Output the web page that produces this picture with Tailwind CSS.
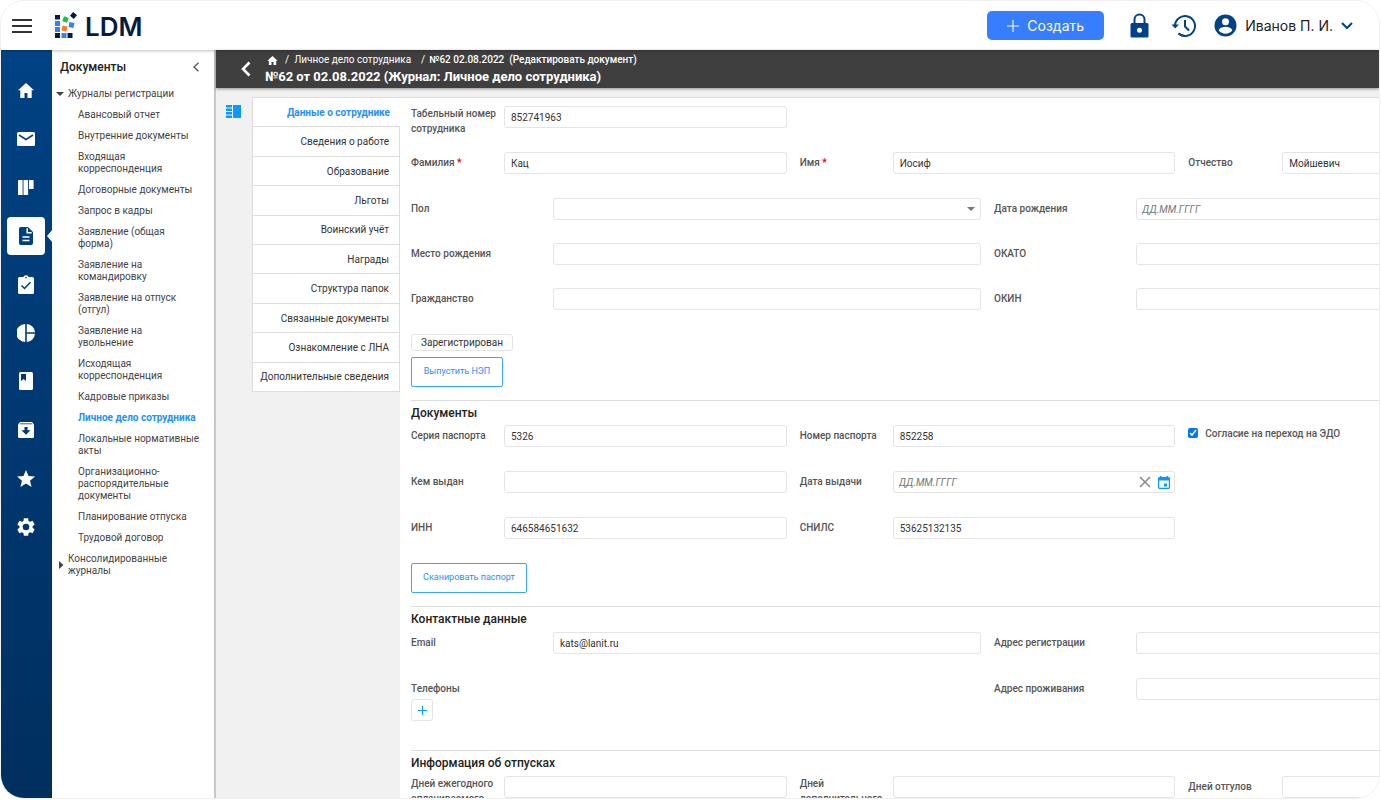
<!DOCTYPE html>
<html lang="ru">
<head>
<meta charset="utf-8">
<meta name="viewport" content="width=device-width, initial-scale=1">
<title>LDM</title>
<script src="https://cdn.jsdelivr.net/npm/@tailwindcss/browser@4"></script>
</head>
<body class="h-screen bg-white pr-px pb-px font-[Roboto,sans-serif] text-[#444]">
<div class="flex h-full flex-col overflow-hidden rounded-3xl border border-[#f1f1f1] bg-white">

  <header class="relative z-10 flex h-[49px] shrink-0 items-center pr-[26px] pl-[11px] shadow-[0_1px_3px_rgba(0,0,0,0.25)]">
    <button aria-label="Меню" class="flex h-4 w-5 flex-col justify-between py-px"><span class="h-0.5 bg-[#333]"></span><span class="h-0.5 bg-[#333]"></span><span class="h-0.5 bg-[#333]"></span></button>
    <a href="#" class="ml-[23px] flex items-center gap-2 text-[#061c3f]">
      <svg width="22" height="27" viewBox="0 0 22 27"><g fill="#061c3f"><rect x="0" y="3" width="5" height="4.500"/><rect x="0" y="21" width="5" height="5"/><rect x="12.500" y="21" width="5" height="5"/><rect x="16" y="1" width="5" height="5" transform="rotate(40 18.500 3.500)"/></g><g fill="#377dff"><rect x="0" y="9" width="5" height="5"/><rect x="0" y="15" width="5" height="5"/><rect x="6.500" y="21" width="5" height="5"/><rect x="14" y="10.500" width="5" height="5" transform="rotate(12 16.500 13)"/></g><rect x="8" y="5" width="5" height="5" fill="#19c23a" transform="rotate(20 10.500 7.500)"/><rect x="7" y="14" width="5" height="5" fill="#ff7a2f" transform="rotate(12 9.500 16.500)"/></svg>
      <span class="pt-0.5 font-[Inter,sans-serif] text-[26px] leading-8 font-semibold">LDM</span>
    </a>
    <button class="ml-auto flex h-[29px] w-[117px] items-center justify-center gap-2 rounded-[5px] bg-[#377dff] font-[Inter,sans-serif] text-sm text-white">
      <svg width="12" height="12" viewBox="0 0 12 12" stroke="#fff" stroke-width="1.100"><path d="M6 0v12M0 6h12"/></svg>Создать
    </button>
    <button aria-label="Блокировка" class="ml-[26px]"><svg width="19" height="25" viewBox="0 0 19 25"><path d="M4.500 11V6.500a5 5 0 0 1 10 0V11" fill="none" stroke="#004287" stroke-width="2"/><rect x=".5" y="10" width="18" height="14.500" rx="1.500" fill="#004287"/><circle cx="9.500" cy="17.300" r="2.500" fill="#fff"/></svg></button>
    <button aria-label="История" class="ml-[22px]"><svg width="26" height="24" viewBox="0 0 26 24" fill="none" stroke="#004287" stroke-width="2"><path d="M4 12.500A10 10 0 1 1 7.500 19.600"/><path d="M7.500 19.600A10 10 0 0 0 14 22" stroke-width="2"/><path d="M14 6v6.500l4 4"/><path d="M.5 10.500h7.500l-3.800 4z" fill="#004287" stroke="none"/></svg></button>
    <button class="ml-[17px] flex items-center gap-2 font-[Inter,sans-serif] text-sm text-[#222]">
      <svg width="23" height="23" viewBox="0 0 23 23"><circle cx="11.500" cy="11.500" r="11" fill="#004287"/><circle cx="11.500" cy="7.800" r="3.500" fill="#fff"/><path d="M4.600 16.200c1.200-2.400 4.600-3.400 6.900-3.400s5.700 1 6.900 3.400a8.400 8.400 0 0 1-13.800 0z" fill="#fff"/></svg>
      <span>Иванов П. И.</span>
      <svg width="12" height="8" viewBox="0 0 12 8" fill="none" stroke="#004287" stroke-width="2"><path d="M1 1l5 5 5-5"/></svg>
    </button>
  </header>

  <div class="flex min-h-0 grow">
    <nav aria-label="Разделы" class="w-[51px] shrink-0 bg-linear-to-b from-[#004284] to-[#002f5f] pt-[21px] pr-0.5">
      <ul class="flex h-[475px] flex-col items-center justify-between">
        <li><a href="#" aria-label="Главная" class="flex size-[38px] items-center justify-center"><svg width="16" height="15" viewBox="0 0 16 15" fill="#fff"><path d="M8 0L0 7.200h2.300V15h4.200v-5h3v5h4.200V7.200H16z"/></svg></a></li>
        <li><a href="#" aria-label="Почта" class="flex size-[38px] items-center justify-center"><svg width="18" height="14" viewBox="0 0 18 14"><rect width="18" height="14" rx="1.500" fill="#fff"/><path d="M2 3l7 4.500L16 3" fill="none" stroke="#00407d" stroke-width="1.500"/></svg></a></li>
        <li><a href="#" aria-label="Доска" class="flex size-[38px] items-center justify-center"><svg width="16" height="15" viewBox="0 0 16 15" fill="#fff"><rect width="4.600" height="15" rx=".6"/><rect x="5.500" width="4.600" height="15" rx=".6"/><rect x="11" width="4.600" height="9" rx=".6"/></svg></a></li>
        <li class="relative"><a href="#" aria-label="Документы" class="flex size-[38px] items-center justify-center rounded bg-white"><svg width="14" height="18" viewBox="0 0 14 18"><path d="M1.800 0H9l5 5v11.200A1.800 1.800 0 0 1 12.200 18H1.800A1.800 1.800 0 0 1 0 16.200V1.800A1.800 1.800 0 0 1 1.800 0z" fill="#00407d"/><path d="M8.200 1.300v4.500h4.500M3.500 10h7M3.500 13.500h7" fill="none" stroke="#fff" stroke-width="1.500"/></svg></a><svg class="absolute top-3 left-10" width="6" height="14" viewBox="0 0 6 14" fill="#fff"><path d="M6 0v14L0 7z"/></svg></li>
        <li><a href="#" aria-label="Задачи" class="flex size-[38px] items-center justify-center"><svg width="16" height="19" viewBox="0 0 16 19"><path d="M1.500 2H5.300a2.800 2.300 0 0 1 5.400 0h3.800A1.500 1.500 0 0 1 16 3.500v14a1.500 1.500 0 0 1-1.500 1.500h-13A1.500 1.500 0 0 1 0 17.500v-14A1.500 1.500 0 0 1 1.500 2z" fill="#fff"/><circle cx="8" cy="2.600" r=".8" fill="#003c77"/><path d="M3.500 10.500l3 3 6-6.300" fill="none" stroke="#003c77" stroke-width="1.500"/></svg></a></li>
        <li><a href="#" aria-label="Отчеты" class="flex size-[38px] items-center justify-center"><svg width="18" height="18" viewBox="0 0 18 18" fill="#fff"><path d="M8.200 0v18A9 9 0 0 1 8.200 0zM9.800 0A9 9 0 0 1 18 8.200H9.800zM9.800 9.800H18A9 9 0 0 1 9.800 18z"/></svg></a></li>
        <li><a href="#" aria-label="Справочники" class="flex size-[38px] items-center justify-center"><svg width="14" height="18" viewBox="0 0 14 18"><rect width="14" height="18" rx="1.500" fill="#fff"/><path d="M2 2h5v7L4.500 7 2 9z" fill="#003870"/></svg></a></li>
        <li><a href="#" aria-label="Архив" class="flex size-[38px] items-center justify-center"><svg width="16" height="16" viewBox="0 0 16 16"><path d="M2 0h12l2 2.500v12a1.500 1.500 0 0 1-1.500 1.500h-13A1.500 1.500 0 0 1 0 14.500v-12z" fill="#fff"/><path d="M1.800 1.800h12.400" stroke="#003870" stroke-width=".8"/><path d="M6.500 5h3v3.200h3L8 12.800 3.500 8.200h3z" fill="#003870"/></svg></a></li>
        <li><a href="#" aria-label="Избранное" class="flex size-[38px] items-center justify-center"><svg width="18" height="17" viewBox="0 0 18 17" fill="#fff"><path d="M9 0l2.500 6 6.500.5-5 4.200L14.600 17 9 13.600 3.400 17 5 10.700 0 6.500 6.500 6z"/></svg></a></li>
        <li><a href="#" aria-label="Настройки" class="flex size-[38px] items-center justify-center"><svg width="22" height="22" viewBox="0 0 24 24" fill="#fff"><path d="M19.140 12.940c.04-.3.060-.61.060-.94s-.02-.64-.07-.94l2.030-1.580a.49.490 0 0 0 .12-.61l-1.920-3.320a.49.490 0 0 0-.59-.22l-2.390.96a7 7 0 0 0-1.620-.94l-.36-2.540a.48.480 0 0 0-.48-.41h-3.840a.47.470 0 0 0-.47.410l-.36 2.540c-.59.240-1.130.57-1.620.94l-2.390-.96a.48.480 0 0 0-.59.220L2.740 8.870a.47.470 0 0 0 .12.610l2.030 1.580c-.05.3-.09.630-.09.940s.02.640.070.940l-2.030 1.580a.49.490 0 0 0-.12.610l1.920 3.320c.12.220.37.290.59.220l2.390-.96c.5.380 1.030.7 1.620.94l.36 2.540c.05.240.24.410.48.410h3.840c.24 0 .44-.17.470-.41l.36-2.540a7 7 0 0 0 1.620-.94l2.390.96c.22.080.47 0 .59-.22l1.920-3.320a.47.470 0 0 0-.12-.61zM12 15.600a3.600 3.600 0 1 1 0-7.200 3.600 3.600 0 0 1 0 7.200z"/></svg></a></li>
      </ul>
    </nav>

    <aside class="w-[164px] shrink-0 border-r-2 border-[#c8c8c8] bg-white pt-2">
      <div class="flex h-[18px] items-center justify-between pr-[14px] pl-2">
        <h2 class="text-xs font-medium text-[#222]">Документы</h2>
        <button aria-label="Свернуть"><svg width="8" height="10" viewBox="0 0 8 10" fill="none" stroke="#555" stroke-width="1.300"><path d="M6.500 .8L2 5l4.500 4.200"/></svg></button>
      </div>
      <ul class="mt-3 flex flex-col gap-[9px] text-[10px] leading-3">
        <li class="flex items-center gap-1 pl-1"><svg width="8" height="4" viewBox="0 0 8 4" fill="#444"><path d="M0 0h8L4 4z"/></svg><a href="#">Журналы регистрации</a></li>
        <li>
          <ul class="flex flex-col gap-[9px] pr-2 pl-[26px]">
            <li><a href="#">Авансовый отчет</a></li>
            <li><a href="#">Внутренние документы</a></li>
            <li><a href="#">Входящая<br>корреспонденция</a></li>
            <li><a href="#">Договорные документы</a></li>
            <li><a href="#">Запрос в кадры</a></li>
            <li><a href="#">Заявление (общая<br>форма)</a></li>
            <li><a href="#">Заявление на<br>командировку</a></li>
            <li><a href="#">Заявление на отпуск<br>(отгул)</a></li>
            <li><a href="#">Заявление на<br>увольнение</a></li>
            <li><a href="#">Исходящая<br>корреспонденция</a></li>
            <li><a href="#">Кадровые приказы</a></li>
            <li><a href="#" class="font-bold text-[#1e90ff]">Личное дело сотрудника</a></li>
            <li><a href="#">Локальные нормативные<br>акты</a></li>
            <li><a href="#">Организационно-<br>распорядительные<br>документы</a></li>
            <li><a href="#">Планирование отпуска</a></li>
            <li><a href="#">Трудовой договор</a></li>
          </ul>
        </li>
        <li class="flex items-center gap-1 pl-[7px]"><svg width="5" height="8" viewBox="0 0 5 8" fill="#444"><path d="M0 0v8l4.500-4z"/></svg><a href="#">Консолидированные<br>журналы</a></li>
      </ul>
    </aside>

    <main class="flex min-w-0 grow flex-col bg-[#f1f1f1]">
      <div class="flex h-[38px] shrink-0 items-center bg-[#3f3f3f] pl-[25px] text-white shadow-[0_1px_3px_rgba(0,0,0,0.4)]">
        <button aria-label="Назад"><svg width="10" height="16" viewBox="0 0 10 16" fill="none" stroke="#fff" stroke-width="2.600"><path d="M8.500 1.500L2 8l6.500 6.500"/></svg></button>
        <div class="ml-[14px]">
          <nav aria-label="Путь" class="flex items-center text-[10px] leading-4">
            <a href="#" aria-label="Главная" class="ml-0.5"><svg width="11" height="9" viewBox="0 0 16 14" fill="#fff"><path d="M8 0L0 7.200h2.300V14h4.200V9.500h3V14h4.200V7.200H16z"/></svg></a>
            <span class="mr-[5px] ml-[7px]">/</span><a href="#">Личное дело сотрудника</a><span class="mr-1 ml-[10px]">/</span><span class="font-medium whitespace-pre">№62 02.08.2022  (Редактировать документ)</span>
          </nav>
          <h1 class="text-[13px] leading-[18px] font-bold">№62 от 02.08.2022 (Журнал: Личное дело сотрудника)</h1>
        </div>
      </div>

      <div class="mt-[9px] flex min-h-0 grow">
        <div class="w-9 shrink-0 pt-2 pl-[10px]"><button aria-label="Вид" class="block"><svg width="15" height="13" viewBox="0 0 15 13" fill="#0c98ff"><rect x="7" width="8" height="13"/><rect width="6" height="2.500"/><rect y="3.500" width="6" height="2.500"/><rect y="7" width="6" height="2.500"/><rect y="10.500" width="6" height="2.500"/></svg></button></div>
        <ul class="flex h-[295px] w-[148px] shrink-0 flex-col border-t border-l border-[#ddd] bg-white text-right text-[10px] text-[#333]">
          <li class="flex flex-1 items-center justify-end border-b border-[#ddd] pr-[10px]"><a href="#" class="font-bold text-[#1e90ff]">Данные о сотруднике</a></li>
          <li class="flex flex-1 items-center justify-end border-r border-b border-[#ddd] pr-[10px]"><a href="#">Сведения о работе</a></li>
          <li class="flex flex-1 items-center justify-end border-r border-b border-[#ddd] pr-[10px]"><a href="#">Образование</a></li>
          <li class="flex flex-1 items-center justify-end border-r border-b border-[#ddd] pr-[10px]"><a href="#">Льготы</a></li>
          <li class="flex flex-1 items-center justify-end border-r border-b border-[#ddd] pr-[10px]"><a href="#">Воинский учёт</a></li>
          <li class="flex flex-1 items-center justify-end border-r border-b border-[#ddd] pr-[10px]"><a href="#">Награды</a></li>
          <li class="flex flex-1 items-center justify-end border-r border-b border-[#ddd] pr-[10px]"><a href="#">Структура папок</a></li>
          <li class="flex flex-1 items-center justify-end border-r border-b border-[#ddd] pr-[10px]"><a href="#">Связанные документы</a></li>
          <li class="flex flex-1 items-center justify-end border-r border-b border-[#ddd] pr-[10px]"><a href="#">Ознакомление с ЛНА</a></li>
          <li class="flex flex-1 items-center justify-end border-r border-b border-[#ddd] pr-[10px]"><a href="#">Дополнительные сведения</a></li>
        </ul>

        <div class="min-w-0 grow overflow-hidden border-t border-[#ddd] bg-white pl-[11px]">
          <form class="w-full min-w-[1166px] pt-2 text-[10px]">
            <section class="h-[294px]">
              <div class="grid h-[46px] grid-cols-3">
                <div class="flex items-start pr-[13px]"><label for="tab" class="flex min-h-[21px] w-[93px] shrink-0 items-center leading-[15px] font-medium text-[#555]">Табельный номер сотрудника</label><input id="tab" value="852741963" class="h-[22px] min-w-0 grow rounded-[3px] border border-[#e4e4e4] px-1.5 text-[#333]"></div>
              </div>
              <div class="grid h-[46px] grid-cols-3">
                <div class="flex items-start pr-[13px]"><label for="fam" class="flex min-h-[21px] w-[93px] shrink-0 items-center leading-[15px] font-medium text-[#555]"><span>Фамилия <b class="text-red-600">*</b></span></label><input id="fam" value="Кац" class="h-[22px] min-w-0 grow rounded-[3px] border border-[#e4e4e4] px-1.5 text-[#333]"></div>
                <div class="flex items-start pr-[13px]"><label for="name" class="flex min-h-[21px] w-[93px] shrink-0 items-center leading-[15px] font-medium text-[#555]"><span>Имя <b class="text-red-600">*</b></span></label><input id="name" value="Иосиф" class="h-[22px] min-w-0 grow rounded-[3px] border border-[#e4e4e4] px-1.5 text-[#333]"></div>
                <div class="flex items-start pr-[13px]"><label for="otch" class="flex min-h-[21px] w-[94px] shrink-0 items-center leading-[15px] font-medium text-[#555]">Отчество</label><input id="otch" value="Мойшевич" class="h-[22px] min-w-0 grow rounded-[3px] border border-[#e4e4e4] px-1.5 text-[#333]"></div>
              </div>
              <div class="grid h-[45px] grid-cols-2">
                <div class="flex items-start pr-[13px]"><label for="pol" class="flex min-h-[21px] w-[142px] shrink-0 items-center leading-[15px] font-medium text-[#555]">Пол</label><div class="relative flex grow"><select id="pol" class="h-[22px] w-full appearance-none rounded-[3px] border border-[#e4e4e4] px-1.5 text-[#333]"><option></option><option>Мужской</option><option>Женский</option></select><svg class="pointer-events-none absolute top-[9px] right-[6px]" width="8" height="4" viewBox="0 0 8 4" fill="#777"><path d="M0 0h8L4 4z"/></svg></div></div>
                <div class="flex items-start pr-[13px]"><label for="dr" class="flex min-h-[21px] w-[142px] shrink-0 items-center leading-[15px] font-medium text-[#555]">Дата рождения</label><input id="dr" placeholder="ДД.ММ.ГГГГ" class="h-[22px] min-w-0 grow rounded-[3px] border border-[#e4e4e4] px-[5px] text-[#333] placeholder:text-[#777] placeholder:italic"></div>
              </div>
              <div class="grid h-[45px] grid-cols-2">
                <div class="flex items-start pr-[13px]"><label for="mr" class="flex min-h-[21px] w-[142px] shrink-0 items-center leading-[15px] font-medium text-[#555]">Место рождения</label><input id="mr" class="h-[22px] min-w-0 grow rounded-[3px] border border-[#e4e4e4] px-1.5 text-[#333]"></div>
                <div class="flex items-start pr-[13px]"><label for="okato" class="flex min-h-[21px] w-[142px] shrink-0 items-center leading-[15px] font-medium text-[#555]">ОКАТО</label><input id="okato" class="h-[22px] min-w-0 grow rounded-[3px] border border-[#e4e4e4] px-1.5 text-[#333]"></div>
              </div>
              <div class="grid h-[46px] grid-cols-2">
                <div class="flex items-start pr-[13px]"><label for="gr" class="flex min-h-[21px] w-[142px] shrink-0 items-center leading-[15px] font-medium text-[#555]">Гражданство</label><input id="gr" class="h-[22px] min-w-0 grow rounded-[3px] border border-[#e4e4e4] px-1.5 text-[#333]"></div>
                <div class="flex items-start pr-[13px]"><label for="okin" class="flex min-h-[21px] w-[142px] shrink-0 items-center leading-[15px] font-medium text-[#555]">ОКИН</label><input id="okin" class="h-[22px] min-w-0 grow rounded-[3px] border border-[#e4e4e4] px-1.5 text-[#333]"></div>
              </div>
              <div class="flex flex-col items-start gap-1.5">
                <span class="flex h-[17px] w-[102px] items-center justify-center rounded-[3px] border border-[#e4e4e4] text-[#333]">Зарегистрирован</span>
                <button type="button" class="h-[30px] w-[92px] rounded-xs border border-[#3aa5ff] text-[9px] text-[#1e90ff]">Выпустить НЭП</button>
              </div>
            </section>

            <section class="h-[206px] border-t border-[#ddd]">
              <h3 class="h-6 pt-1 text-xs leading-4 font-medium text-[#222]">Документы</h3>
              <div class="grid h-[46px] grid-cols-3">
                <div class="flex items-start pr-[13px]"><label for="ser" class="flex min-h-[21px] w-[93px] shrink-0 items-center leading-[15px] font-medium text-[#555]">Серия паспорта</label><input id="ser" value="5326" class="h-[22px] min-w-0 grow rounded-[3px] border border-[#e4e4e4] px-1.5 text-[#333]"></div>
                <div class="flex items-start pr-[13px]"><label for="num" class="flex min-h-[21px] w-[93px] shrink-0 items-center leading-[15px] font-medium text-[#555]">Номер паспорта</label><input id="num" value="852258" class="h-[22px] min-w-0 grow rounded-[3px] border border-[#e4e4e4] px-1.5 text-[#333]"></div>
                <div class="flex h-4 items-center gap-[7px]"><input id="edo" type="checkbox" checked class="size-[10px] accent-[#0075ff]"><label for="edo" class="font-medium text-[#555]">Согласие на переход на ЭДО</label></div>
              </div>
              <div class="grid h-[46px] grid-cols-3">
                <div class="flex items-start pr-[13px]"><label for="kem" class="flex min-h-[21px] w-[93px] shrink-0 items-center leading-[15px] font-medium text-[#555]">Кем выдан</label><input id="kem" class="h-[22px] min-w-0 grow rounded-[3px] border border-[#e4e4e4] px-1.5 text-[#333]"></div>
                <div class="flex items-start pr-[13px]"><label for="dv" class="flex min-h-[21px] w-[93px] shrink-0 items-center leading-[15px] font-medium text-[#555]">Дата выдачи</label><div class="flex h-[22px] min-w-0 grow items-center gap-[7px] rounded-[3px] border border-[#e4e4e4] pr-1"><input id="dv" placeholder="ДД.ММ.ГГГГ" class="min-w-0 grow px-[5px] text-[#333] placeholder:text-[#777] placeholder:italic"><button type="button" aria-label="Очистить"><svg width="12" height="12" viewBox="0 0 12 12" stroke="#888" stroke-width="1.500"><path d="M1 1l10 10M11 1L1 11"/></svg></button><button type="button" aria-label="Календарь"><svg width="12" height="13" viewBox="0 0 12 13"><rect x=".6" y="1.600" width="10.800" height="10.800" rx="1" fill="none" stroke="#0c98ff" stroke-width="1.200"/><path d="M.5 1.500h11v3H.5zM2 0h1.500v2H2zM8.500 0H10v2H8.500zM6 7.500h3v3H6z" fill="#0c98ff"/></svg></button></div></div>
              </div>
              <div class="grid h-[46px] grid-cols-3">
                <div class="flex items-start pr-[13px]"><label for="inn" class="flex min-h-[21px] w-[93px] shrink-0 items-center leading-[15px] font-medium text-[#555]">ИНН</label><input id="inn" value="646584651632" class="h-[22px] min-w-0 grow rounded-[3px] border border-[#e4e4e4] px-1.5 text-[#333]"></div>
                <div class="flex items-start pr-[13px]"><label for="snils" class="flex min-h-[21px] w-[93px] shrink-0 items-center leading-[15px] font-medium text-[#555]">СНИЛС</label><input id="snils" value="53625132135" class="h-[22px] min-w-0 grow rounded-[3px] border border-[#e4e4e4] px-1.5 text-[#333]"></div>
              </div>
              <button type="button" class="h-[30px] w-[116px] rounded-xs border border-[#3aa5ff] text-[9px] text-[#1e90ff]">Сканировать паспорт</button>
            </section>

            <section class="h-[144px] border-t border-[#ddd]">
              <h3 class="h-[25px] pt-1 text-xs leading-4 font-medium text-[#222]">Контактные данные</h3>
              <div class="grid h-[46px] grid-cols-2">
                <div class="flex items-start pr-[13px]"><label for="email" class="flex min-h-[21px] w-[142px] shrink-0 items-center leading-[15px] font-medium text-[#555]">Email</label><input id="email" value="kats@lanit.ru" class="h-[22px] min-w-0 grow rounded-[3px] border border-[#e4e4e4] px-1.5 text-[#333]"></div>
                <div class="flex items-start pr-[13px]"><label for="ar" class="flex min-h-[21px] w-[142px] shrink-0 items-center leading-[15px] font-medium text-[#555]">Адрес регистрации</label><input id="ar" class="h-[22px] min-w-0 grow rounded-[3px] border border-[#e4e4e4] px-1.5 text-[#333]"></div>
              </div>
              <div class="grid grid-cols-2">
                <div><span class="flex h-[21px] items-center font-medium text-[#555]">Телефоны</span><button type="button" aria-label="Добавить телефон" class="flex size-[22px] items-center justify-center rounded-[3px] border border-[#e4e4e4]"><svg width="9" height="9" viewBox="0 0 9 9" stroke="#0c98ff" stroke-width="1.200"><path d="M4.500 0v9M0 4.500h9"/></svg></button></div>
                <div class="flex items-start pr-[13px]"><label for="ap" class="flex min-h-[21px] w-[142px] shrink-0 items-center leading-[15px] font-medium text-[#555]">Адрес проживания</label><input id="ap" class="h-[22px] min-w-0 grow rounded-[3px] border border-[#e4e4e4] px-1.5 text-[#333]"></div>
              </div>
            </section>

            <section class="border-t border-[#ddd]">
              <h3 class="h-[25px] pt-1 text-xs leading-4 font-medium text-[#222]">Информация об отпусках</h3>
              <div class="grid grid-cols-3">
                <div class="flex items-start pr-[13px]"><label for="d1" class="flex min-h-[21px] w-[93px] shrink-0 items-center leading-[15px] font-medium text-[#555]">Дней ежегодного оплачиваемого</label><input id="d1" class="h-[22px] min-w-0 grow rounded-[3px] border border-[#e4e4e4] px-1.5 text-[#333]"></div>
                <div class="flex items-start pr-[13px]"><label for="d2" class="flex min-h-[21px] w-[93px] shrink-0 items-center leading-[15px] font-medium text-[#555]">Дней дополнительного</label><input id="d2" class="h-[22px] min-w-0 grow rounded-[3px] border border-[#e4e4e4] px-1.5 text-[#333]"></div>
                <div class="flex items-start pr-[13px]"><label for="d3" class="flex min-h-[21px] w-[94px] shrink-0 items-center leading-[15px] font-medium text-[#555]">Дней отгулов</label><input id="d3" class="h-[22px] min-w-0 grow rounded-[3px] border border-[#e4e4e4] px-1.5 text-[#333]"></div>
              </div>
            </section>
          </form>
        </div>
      </div>
    </main>
  </div>
</div>
</body>
</html>
